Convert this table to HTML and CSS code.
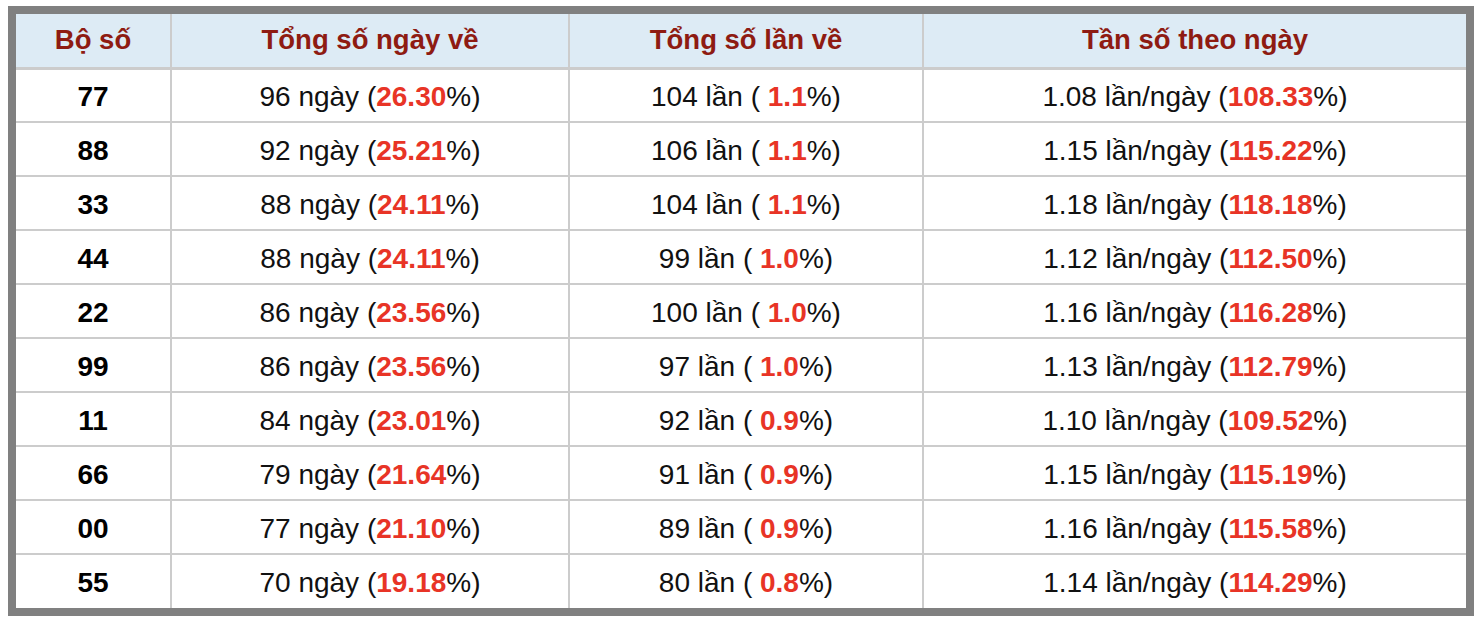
FILE: index.html
```html
<!DOCTYPE html>
<html lang="vi">
<head>
<meta charset="utf-8">
<title>Thống kê bộ số</title>
<link rel="stylesheet" href="styles.css">
</head>
<body>
<div class="frame">
<table class="stats">
<colgroup>
<col class="c1"><col class="c2"><col class="c3"><col class="c4">
</colgroup>
<thead>
<tr><th>Bộ số</th><th>Tổng số ngày về</th><th>Tổng số lần về</th><th>Tần số theo ngày</th></tr>
</thead>
<tbody>
<tr><td class="num">77</td><td>96 ngày (<b>26.30</b>%)</td><td>104 lần ( <b>1.1</b>%)</td><td>1.08 lần/ngày (<b>108.33</b>%)</td></tr>
<tr><td class="num">88</td><td>92 ngày (<b>25.21</b>%)</td><td>106 lần ( <b>1.1</b>%)</td><td>1.15 lần/ngày (<b>115.22</b>%)</td></tr>
<tr><td class="num">33</td><td>88 ngày (<b>24.11</b>%)</td><td>104 lần ( <b>1.1</b>%)</td><td>1.18 lần/ngày (<b>118.18</b>%)</td></tr>
<tr><td class="num">44</td><td>88 ngày (<b>24.11</b>%)</td><td>99 lần ( <b>1.0</b>%)</td><td>1.12 lần/ngày (<b>112.50</b>%)</td></tr>
<tr><td class="num">22</td><td>86 ngày (<b>23.56</b>%)</td><td>100 lần ( <b>1.0</b>%)</td><td>1.16 lần/ngày (<b>116.28</b>%)</td></tr>
<tr><td class="num">99</td><td>86 ngày (<b>23.56</b>%)</td><td>97 lần ( <b>1.0</b>%)</td><td>1.13 lần/ngày (<b>112.79</b>%)</td></tr>
<tr><td class="num">11</td><td>84 ngày (<b>23.01</b>%)</td><td>92 lần ( <b>0.9</b>%)</td><td>1.10 lần/ngày (<b>109.52</b>%)</td></tr>
<tr><td class="num">66</td><td>79 ngày (<b>21.64</b>%)</td><td>91 lần ( <b>0.9</b>%)</td><td>1.15 lần/ngày (<b>115.19</b>%)</td></tr>
<tr><td class="num">00</td><td>77 ngày (<b>21.10</b>%)</td><td>89 lần ( <b>0.9</b>%)</td><td>1.16 lần/ngày (<b>115.58</b>%)</td></tr>
<tr><td class="num">55</td><td>70 ngày (<b>19.18</b>%)</td><td>80 lần ( <b>0.8</b>%)</td><td>1.14 lần/ngày (<b>114.29</b>%)</td></tr>
</tbody>
</table>
</div>
</body>
</html>
```

FILE: styles.css
```css
html, body {
  background: #ffffff;
}
body {
  margin: 6px 4px 8px 8px;
  font-family: "Liberation Sans", Arial, sans-serif;
}
.frame {
  border: 8px solid #808080;
  background: #ffffff;
}
.stats {
  width: 100%;
  border-collapse: collapse;
  border-style: hidden;
  table-layout: fixed;
}
.c1 { width: 155px; }
.c2 { width: 398px; }
.c3 { width: 354px; }
.c4 { width: 543px; }
.stats th,
.stats td {
  border: 2px solid #cccccc;
  text-align: center;
  vertical-align: middle;
  padding: 0;
}
.stats thead tr,
.stats tbody tr {
  height: 54px;
}
.stats th {
  background: #ddebf5;
  color: #8e1b12;
  font-size: 27.5px;
  font-weight: bold;
  border-bottom-width: 3px;
}
.stats td {
  color: #111111;
  font-size: 28px;
  padding-top: 3px;
}
.stats td.num {
  font-weight: bold;
  color: #000000;
}
.stats td b {
  color: #e83426;
  font-weight: bold;
}
```
